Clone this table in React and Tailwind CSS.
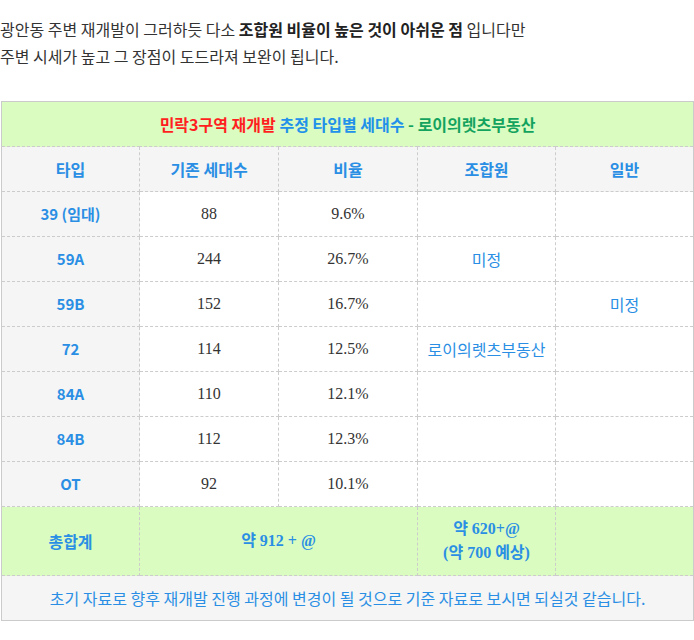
import React from 'react'

const rows = [
  { type: '39 (임대)', count: '88', ratio: '9.6%', member: '', general: '' },
  { type: '59A', count: '244', ratio: '26.7%', member: '미정', general: '' },
  { type: '59B', count: '152', ratio: '16.7%', member: '', general: '미정' },
  { type: '72', count: '114', ratio: '12.5%', member: '로이의렛츠부동산', general: '' },
  { type: '84A', count: '110', ratio: '12.1%', member: '', general: '' },
  { type: '84B', count: '112', ratio: '12.3%', member: '', general: '' },
  { type: 'OT', count: '92', ratio: '10.1%', member: '', general: '' }
]

const sans = { fontFamily: '"Noto Sans CJK KR", "Noto Sans", sans-serif' }
const serif = { fontFamily: '"Liberation Serif", "Noto Sans CJK KR", serif' }

const cell = 'border border-dashed border-[#cccccc] text-center align-middle p-0'

export default function App() {
  return (
    <div className="w-[694px] bg-white pt-[16px]" style={sans}>
      <p className="text-[16px] leading-[27px] text-[#333]">
        광안동 주변 재개발이 그러하듯 다소 <b className="font-bold text-[#222]">조합원 비율이 높은 것이 아쉬운 점</b> 입니다만
        <br />
        주변 시세가 높고 그 장점이 도드라져 보완이 됩니다.
      </p>

      <table className="mt-[31px] ml-px w-[692px] table-fixed border-collapse border border-solid border-[#cbcbcb]">
        <colgroup>
          <col className="w-[138px]" />
          <col className="w-[139px]" />
          <col className="w-[139px]" />
          <col className="w-[138px]" />
          <col className="w-[138px]" />
        </colgroup>
        <tbody>
          <tr className="h-[45px] bg-[#dafcc0]">
            <td colSpan={5} className={`${cell} text-[16px] font-semibold`}>
              <span className="text-[#ff1f1f]">민락3구역 재개발</span>{' '}
              <span className="text-[#2291ea]">추정 타입별 세대수</span>{' '}
              <span className="text-[#13a35e]">- 로이의렛츠부동산</span>
            </td>
          </tr>
          <tr className="h-[45px] bg-[#f5f5f5] text-[16px] font-semibold text-[#2a8fe4]">
            <td className={cell}>타입</td>
            <td className={cell}>기존 세대수</td>
            <td className={cell}>비율</td>
            <td className={cell}>조합원</td>
            <td className={cell}>일반</td>
          </tr>
          {rows.map((r) => (
            <tr key={r.type} className="h-[45px]">
              <td className={`${cell} bg-[#f5f5f5] text-[15px] font-bold text-[#2a8fe4]`}>{r.type}</td>
              <td className={`${cell} text-[16px] text-[#333]`} style={serif}>{r.count}</td>
              <td className={`${cell} text-[16px] text-[#333]`} style={serif}>{r.ratio}</td>
              <td className={`${cell} text-[16px] text-[#2a8fe4]`}>{r.member}</td>
              <td className={`${cell} text-[16px] text-[#2a8fe4]`}>{r.general}</td>
            </tr>
          ))}
          <tr className="h-[69px] bg-[#dafcc0] font-bold text-[#2a8fe4]">
            <td className={`${cell} text-[16px] font-semibold`} style={sans}>총합계</td>
            <td colSpan={2} className={`${cell} text-[16px]`} style={serif}>약 912 + @</td>
            <td className={`${cell} text-[16px] leading-[24px]`} style={serif}>
              약 620+@
              <br />
              (약 700 예상)
            </td>
            <td className={cell}></td>
          </tr>
          <tr className="h-[45px] bg-[#f5f5f5]">
            <td colSpan={5} className={`${cell} text-[16px] text-[#2a8fe4]`}>
              초기 자료로 향후 재개발 진행 과정에 변경이 될 것으로 기준 자료로 보시면 되실것 같습니다.
            </td>
          </tr>
        </tbody>
      </table>
    </div>
  )
}
